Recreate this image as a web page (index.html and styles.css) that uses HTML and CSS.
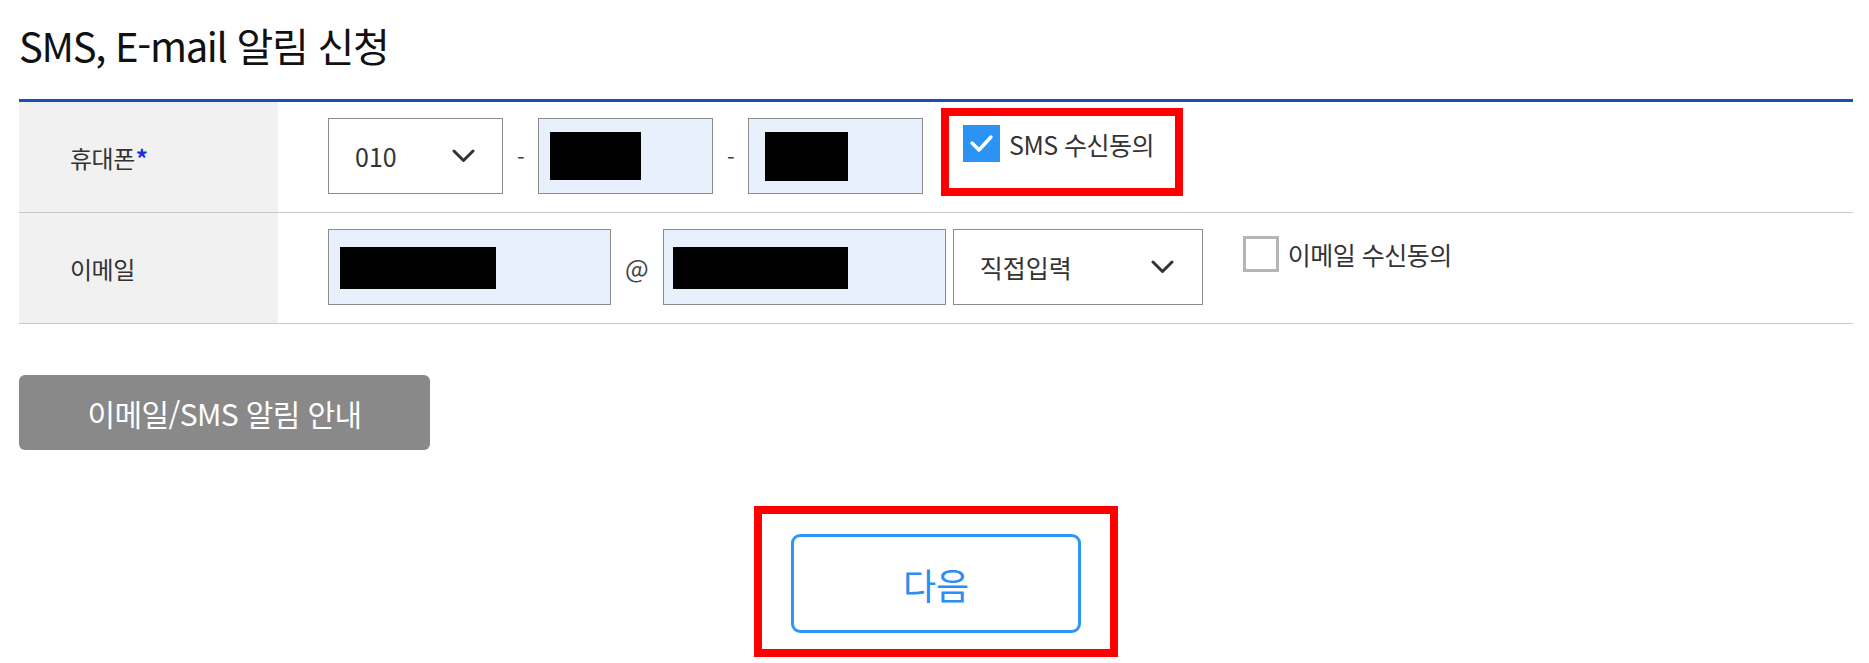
FILE: index.html
```html
<!DOCTYPE html>
<html lang="ko">
<head>
<meta charset="utf-8">
<title>SMS, E-mail 알림 신청</title>
<link rel="stylesheet" href="styles.css">
</head>
<body>
<main class="page">
  <h2 class="title">SMS, E-mail 알림 신청</h2>

  <div class="form-table">
    <div class="row">
      <div class="th">휴대폰<span class="req">*</span></div>
      <div class="td">
        <div class="field select select-phone">
          <span class="select-value">010</span>
          <svg class="chev" width="23" height="14" viewBox="0 0 23 14"><polyline points="2,2 11.5,11.5 21,2" fill="none" stroke="#333" stroke-width="3" stroke-linecap="round" stroke-linejoin="round"/></svg>
        </div>
        <span class="sep">-</span>
        <div class="field input filled phone-part"><span class="redact redact-p1"></span></div>
        <span class="sep">-</span>
        <div class="field input filled phone-part"><span class="redact redact-p2"></span></div>
        <label class="consent annotated">
          <span class="cb cb-checked">
            <svg width="37" height="37" viewBox="0 0 37 37"><polyline points="9,18 16,25 28,12" fill="none" stroke="#fff" stroke-width="3.5" stroke-linecap="round" stroke-linejoin="round"/></svg>
          </span>
          <span class="consent-text">SMS 수신동의</span>
        </label>
      </div>
    </div>

    <div class="row">
      <div class="th">이메일</div>
      <div class="td">
        <div class="field input filled email-part"><span class="redact redact-e1"></span></div>
        <span class="at">@</span>
        <div class="field input filled email-part"><span class="redact redact-e2"></span></div>
        <div class="field select select-domain">
          <span class="select-value">직접입력</span>
          <svg class="chev" width="23" height="14" viewBox="0 0 23 14"><polyline points="2,2 11.5,11.5 21,2" fill="none" stroke="#333" stroke-width="3" stroke-linecap="round" stroke-linejoin="round"/></svg>
        </div>
        <label class="consent">
          <span class="cb cb-empty"></span>
          <span class="consent-text">이메일 수신동의</span>
        </label>
      </div>
    </div>
  </div>

  <button class="btn-guide" type="button">이메일/SMS 알림 안내</button>

  <div class="actions">
    <div class="next-frame">
      <button class="btn-next" type="button">다음</button>
    </div>
  </div>
</main>
</body>
</html>
```

FILE: styles.css
```css
* { box-sizing: border-box; }

html, body {
  margin: 0;
  background: #fff;
}

body {
  font-family: "Noto Sans CJK KR", "Noto Sans", sans-serif;
  color: #333;
}

.page {
  padding: 21px 16px 0 19px;
}

.title {
  margin: 0 0 30px;
  font-size: 40px;
  line-height: 48px;
  font-weight: 400;
  color: #111;
  letter-spacing: -1.3px;
}

.form-table {
  border-top: 3px solid #1652b5;
}

.row {
  display: grid;
  grid-template-columns: 259px 1fr;
  border-bottom: 1px solid #c8c8c8;
}

.th {
  background: #f1f1f1;
  padding-left: 51px;
  display: flex;
  align-items: center;
  font-size: 24px;
  color: #333;
  letter-spacing: -0.5px;
}

.req {
  color: #1533e0;
  font-weight: 700;
  margin-left: 1px;
}

.td {
  display: flex;
  align-items: flex-start;
  padding: 16px 0 18px 50px;
}

.field {
  height: 76px;
  border: 1px solid #8c8c8c;
  flex: none;
}

.input.filled {
  background: #e8f0fe;
  position: relative;
}

.phone-part { width: 175px; }
.email-part { width: 283px; }

.select {
  background: #fff;
  display: flex;
  align-items: center;
  justify-content: space-between;
  padding: 0 27px 0 26px;
  font-size: 25px;
  color: #333;
}

.select-phone { width: 175px; }
.select-domain { width: 250px; margin-left: 7px; padding-right: 28px; }

.chev { display: block; flex: none; }

.sep {
  align-self: center;
  margin: 0 14px;
  width: 7px;
  font-size: 22px;
  color: #444;
  text-align: center;
}

.at {
  align-self: center;
  margin: 0 14px 0 14px;
  font-size: 25px;
  color: #444;
}

.redact {
  display: block;
  background: #000;
  position: absolute;
}

.redact-p1 { left: 11px; top: 13px; width: 91px; height: 48px; }
.redact-p2 { left: 16px; top: 13px; width: 83px; height: 49px; }
.redact-e1 { left: 11px; top: 17px; width: 156px; height: 42px; }
.redact-e2 { left: 9px; top: 17px; width: 175px; height: 42px; }

.consent {
  display: flex;
  align-items: center;
  margin: 7px 0 0 40px;
  font-size: 25px;
  color: #333;
  letter-spacing: -0.5px;
}

.consent-text { margin-left: 9px; }

.cb {
  display: block;
  flex: none;
}

.cb-checked {
  width: 37px;
  height: 37px;
  background: #2a93f3;
}

.cb-checked svg { display: block; }

.cb-empty {
  width: 36px;
  height: 36px;
  border: 3px solid #b5b5b5;
  background: #fff;
}

.annotated {
  position: relative;
}

.annotated::after {
  content: "";
  position: absolute;
  top: -17px;
  left: -22px;
  bottom: -34px;
  right: -29px;
  border: 8px solid #ff0000;
  pointer-events: none;
}

.btn-guide {
  display: block;
  margin-top: 51px;
  width: 411px;
  height: 75px;
  border: none;
  border-radius: 6px;
  background: #898989;
  color: #fff;
  font-family: inherit;
  font-size: 30px;
  letter-spacing: -0.6px;
  padding: 0;
}

.actions {
  display: flex;
  justify-content: center;
  margin-top: 56px;
}

.next-frame {
  border: 8px solid #ff0000;
  padding: 20px 29px 16px 29px;
}

.btn-next {
  display: block;
  width: 290px;
  height: 99px;
  border: 3px solid #2e96f6;
  border-radius: 9px;
  background: #fff;
  color: #2b8ff0;
  font-family: inherit;
  font-size: 36px;
  padding: 0;
}
```
